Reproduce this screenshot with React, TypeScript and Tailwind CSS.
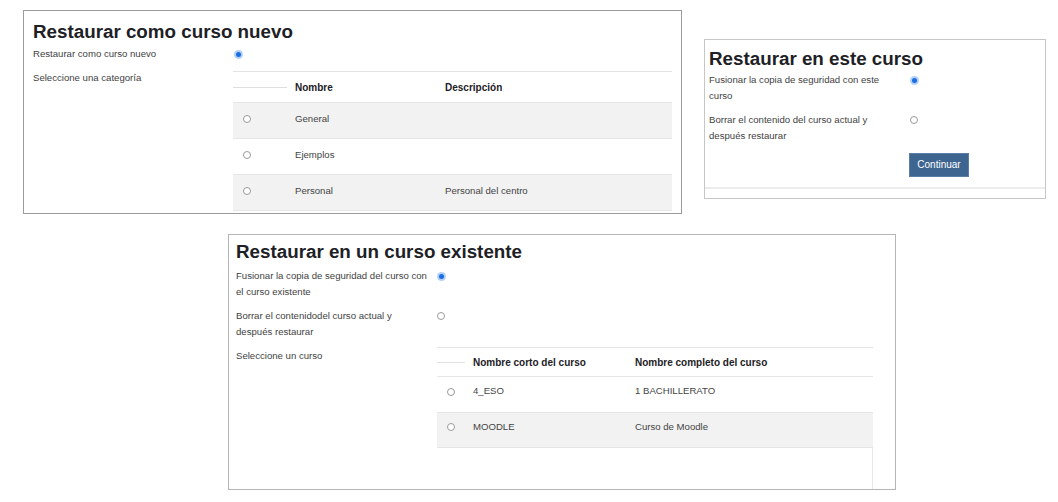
import React from 'react';

const font = { fontFamily: '"Liberation Sans", Arial, sans-serif' };

function Radio({ checked = false }: { checked?: boolean }) {
  if (checked) {
    return (
      <span className="flex h-[9px] w-[9px] items-center justify-center rounded-full bg-[#b3d1f8]">
        <span className="h-[5px] w-[5px] rounded-full bg-[#1a6ee0]" />
      </span>
    );
  }
  return <span className="block h-[8px] w-[8px] rounded-full border border-[#9a9a9a] bg-white" />;
}

function Title({ children }: { children: React.ReactNode }) {
  return <h2 className="text-[18.8px] font-bold leading-[24px] text-[#1d2125]">{children}</h2>;
}

// una fila de opción: etiqueta a la izquierda, radio a la derecha
function OptionRow({ lines, checked, className = '' }: { lines: string[]; checked?: boolean; className?: string }) {
  return (
    <div className={`flex items-start ${className}`}>
      <div className="w-[201px] text-[9.6px] leading-[16px] text-[#3f3f3f]">
        {lines.map((l) => (
          <div key={l}>{l}</div>
        ))}
      </div>
      <div className="pt-[4px]">
        <Radio checked={checked} />
      </div>
    </div>
  );
}

interface Row {
  a: string;
  b: string;
}

function SelectTable({
  cols,
  rows,
  widths,
  firstStriped,
  rowHeights,
  headHeight,
  rowPad,
}: {
  cols: [string, string];
  rows: Row[];
  widths: [string, string];
  firstStriped: boolean;
  rowHeights: string[];
  headHeight: string;
  rowPad: string;
}) {
  return (
    <div className="border-t border-[#e3e3e3]">
      <div className={`flex items-center ${headHeight}`}>
        <div className={`${widths[0]} flex items-center`}>
          <div className="h-px w-full bg-[#e0e0e0]" />
        </div>
        <div className={`${widths[1]} pl-[8px] text-[10px] font-bold text-[#1d2125]`}>{cols[0]}</div>
        <div className="flex-1 pl-[8px] text-[10px] font-bold text-[#1d2125]">{cols[1]}</div>
      </div>
      {rows.map((r, i) => {
        const striped = firstStriped ? i % 2 === 0 : i % 2 === 1;
        return (
          <div
            key={r.a}
            className={`flex items-center border-t border-[#e6e6e6] ${rowHeights[i]} ${rowPad} ${striped ? 'bg-[#f2f2f2]' : 'bg-white'}`}
          >
            <div className={`${widths[0]} pl-[10px]`}>
              <Radio />
            </div>
            <div className={`${widths[1]} pl-[8px] text-[9.6px] text-[#444]`}>{r.a}</div>
            <div className="flex-1 pl-[8px] text-[9.6px] text-[#444]">{r.b}</div>
          </div>
        );
      })}
      <div className="border-t border-[#e6e6e6]" />
    </div>
  );
}

export default function App() {
  return (
    <div className="h-[502px] w-[1058px] overflow-hidden bg-white" style={font}>
      <div className="flex items-start pl-[23px] pt-[10px]">
        {/* Restaurar como curso nuevo */}
        <div className="h-[204px] w-[659px] overflow-hidden border border-[#9c9c9c] pl-[9px] pt-[9px]">
          <Title>Restaurar como curso nuevo</Title>
          <OptionRow lines={['Restaurar como curso nuevo']} checked className="mt-[2px] h-[23px]" />
          <div className="flex items-start">
            <div className="w-[200px] pt-px text-[9.6px] leading-[16px] text-[#3f3f3f]">Seleccione una categoría</div>
            <div className="mt-[2px] w-[439px]">
              <SelectTable
                cols={['Nombre', 'Descripción']}
                widths={['w-[54px]', 'w-[150px]']}
                headHeight="h-[30px]"
                rowHeights={['h-[36px]', 'h-[36px]', 'h-[36px]']}
                rowPad="pb-[3px]"
                firstStriped
                rows={[
                  { a: 'General', b: '' },
                  { a: 'Ejemplos', b: '' },
                  { a: 'Personal', b: 'Personal del centro' },
                ]}
              />
            </div>
          </div>
        </div>

        {/* Restaurar en este curso */}
        <div className="ml-[22px] mt-[29px] flex h-[160px] w-[342px] flex-col border border-[#c6c6c6] pl-[4px] pt-[7px]">
          <Title>Restaurar en este curso</Title>
          <OptionRow lines={['Fusionar la copia de seguridad con este', 'curso']} checked className="mt-[1px]" />
          <OptionRow lines={['Borrar el contenido del curso actual y', 'después restaurar']} className="mt-[8px]" />
          <div className="mt-[7px] pl-[200px]">
            <button className="h-[24px] w-[60px] border border-[#5a7ea6] bg-[#3e6590] text-[10px] text-white">
              Continuar
            </button>
          </div>
          <div className="-ml-[4px] mt-[10px] h-[2px] bg-[#ececec]" />
        </div>
      </div>

      {/* Restaurar en un curso existente */}
      <div className="ml-[228px] mt-[20px] h-[256px] w-[668px] overflow-hidden border border-[#b5b5b5] pl-[7px] pt-[5px]">
        <Title>Restaurar en un curso existente</Title>
        <OptionRow
          lines={['Fusionar la copia de seguridad del curso con', 'el curso existente']}
          checked
          className="mt-[4px]"
        />
        <OptionRow lines={['Borrar el contenidodel curso actual y', 'después restaurar']} className="mt-[8px]" />
        <div className="mt-[7px] flex items-start">
          <div className="w-[201px] pt-px text-[9.6px] leading-[16px] text-[#3f3f3f]">Seleccione un curso</div>
          <div className="w-[436px]">
            <SelectTable
              cols={['Nombre corto del curso', 'Nombre completo del curso']}
              widths={['w-[28px]', 'w-[162px]']}
              headHeight="h-[28px]"
              rowHeights={['h-[36px]', 'h-[35px]']}
              rowPad="pb-[6px]"
              firstStriped={false}
              rows={[
                { a: '4_ESO', b: '1 BACHILLERATO' },
                { a: 'MOODLE', b: 'Curso de Moodle' },
              ]}
            />
            <div className="ml-auto h-[45px] w-px bg-[#e6e6e6]" />
          </div>
        </div>
      </div>
    </div>
  );
}
